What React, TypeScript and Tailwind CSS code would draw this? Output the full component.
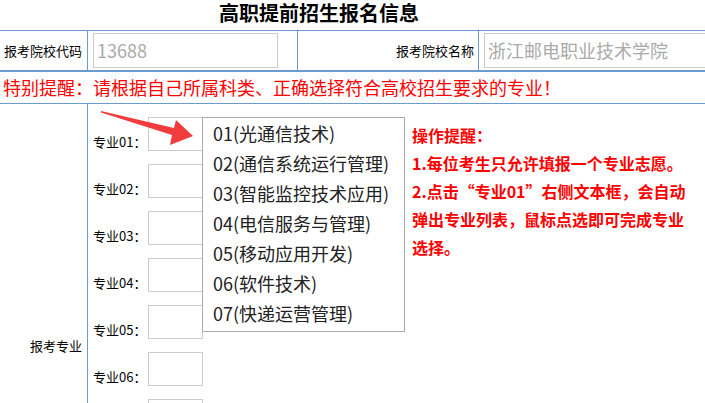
import React from "react";

const majors = ["01", "02", "03", "04", "05", "06", "07", "08", "09", "10"];
const options = [
  "01(光通信技术)",
  "02(通信系统运行管理)",
  "03(智能监控技术应用)",
  "04(电信服务与管理)",
  "05(移动应用开发)",
  "06(软件技术)",
  "07(快递运营管理)",
];

export default function App() {
  return (
    <div lang="zh-CN" className="relative w-[705px] h-[403px] overflow-hidden bg-white text-black font-['Noto_Sans_CJK_SC','Noto_Sans',sans-serif]">
      <div className="w-[638px] h-[30px] text-center text-[20px] font-bold leading-[26px]">
        高职提前招生报名信息
      </div>
      <div className="w-[800px]">
        {/* row 1 */}
        <div className="flex h-[42px] border-t border-b-2 border-[#6b9bd1]">
          <div className="w-[88px] flex items-center justify-end pr-[5px] border-r border-[#6b9bd1] text-[13px]">
            报考院校代码
          </div>
          <div className="w-[210px] flex items-center pl-[5px] border-r border-[#6b9bd1]">
            <div className="w-[185px] h-[35px] border border-[#cccccc] flex items-center pl-[3px] text-[18px] text-[#aaaaaa]">
              13688
            </div>
          </div>
          <div className="w-[181px] flex items-center justify-end pr-[4px] border-r border-[#6b9bd1] text-[13px]">
            报考院校名称
          </div>
          <div className="flex-1 flex items-center pl-[5px]">
            <div className="w-[300px] h-[35px] border border-[#cccccc] flex items-center pl-[3px] text-[18px] text-[#aaaaaa]">
              浙江邮电职业技术学院
            </div>
          </div>
        </div>
        {/* row 2 */}
        <div className="flex items-center h-[32px] border-b border-[#6b9bd1] pl-[3px] text-[18px] text-[#ff0000]">
          特别提醒：请根据自己所属科类、正确选择符合高校招生要求的专业！
        </div>
        {/* row 3 */}
        <div className="flex">
          <div className="w-[88px] flex items-center justify-end pr-[5px] border-r border-[#6b9bd1] text-[13px]">
            报考专业
          </div>
          <div className="w-[324px] flex flex-col gap-[13px] pt-[13px] pb-[14px] pl-[5px]">
            {majors.map((m, i) => (
              <div key={m} className="flex items-end h-[34px]">
                <div className="w-[55px] text-[13px] leading-[17px] pb-[1px]">专业{m}：</div>
                <div className="relative w-[55px] h-[34px] border border-[#cccccc] bg-white">
                  {i === 0 && (
                    <div className="absolute left-[53px] top-[-1px] z-10 w-[203px] h-[215px] border border-[#aaaaaa] bg-white pl-[10px] text-[18px] text-[#222222]">
                      {options.map((o) => (
                        <div key={o} className="h-[30px] leading-[30px] whitespace-nowrap">
                          {o}
                        </div>
                      ))}
                    </div>
                  )}
                </div>
              </div>
            ))}
          </div>
          <div className="pt-[17px] text-[16px] font-bold leading-[28px] text-[#ff0000] whitespace-nowrap">
            <div>操作提醒：</div>
            <div>1.每位考生只允许填报一个专业志愿。</div>
            <div>2.点击“专业01”右侧文本框，会自动</div>
            <div>弹出专业列表，鼠标点选即可完成专业</div>
            <div>选择。</div>
          </div>
        </div>
      </div>
      <svg className="absolute left-0 top-0 pointer-events-none" width="705" height="403" viewBox="0 0 705 403">
        <polygon
          points="101,111 174,128 176,120 193,136 170,145 172,135 101,112.5"
          fill="#f03c3c"
        />
      </svg>
    </div>
  );
}
